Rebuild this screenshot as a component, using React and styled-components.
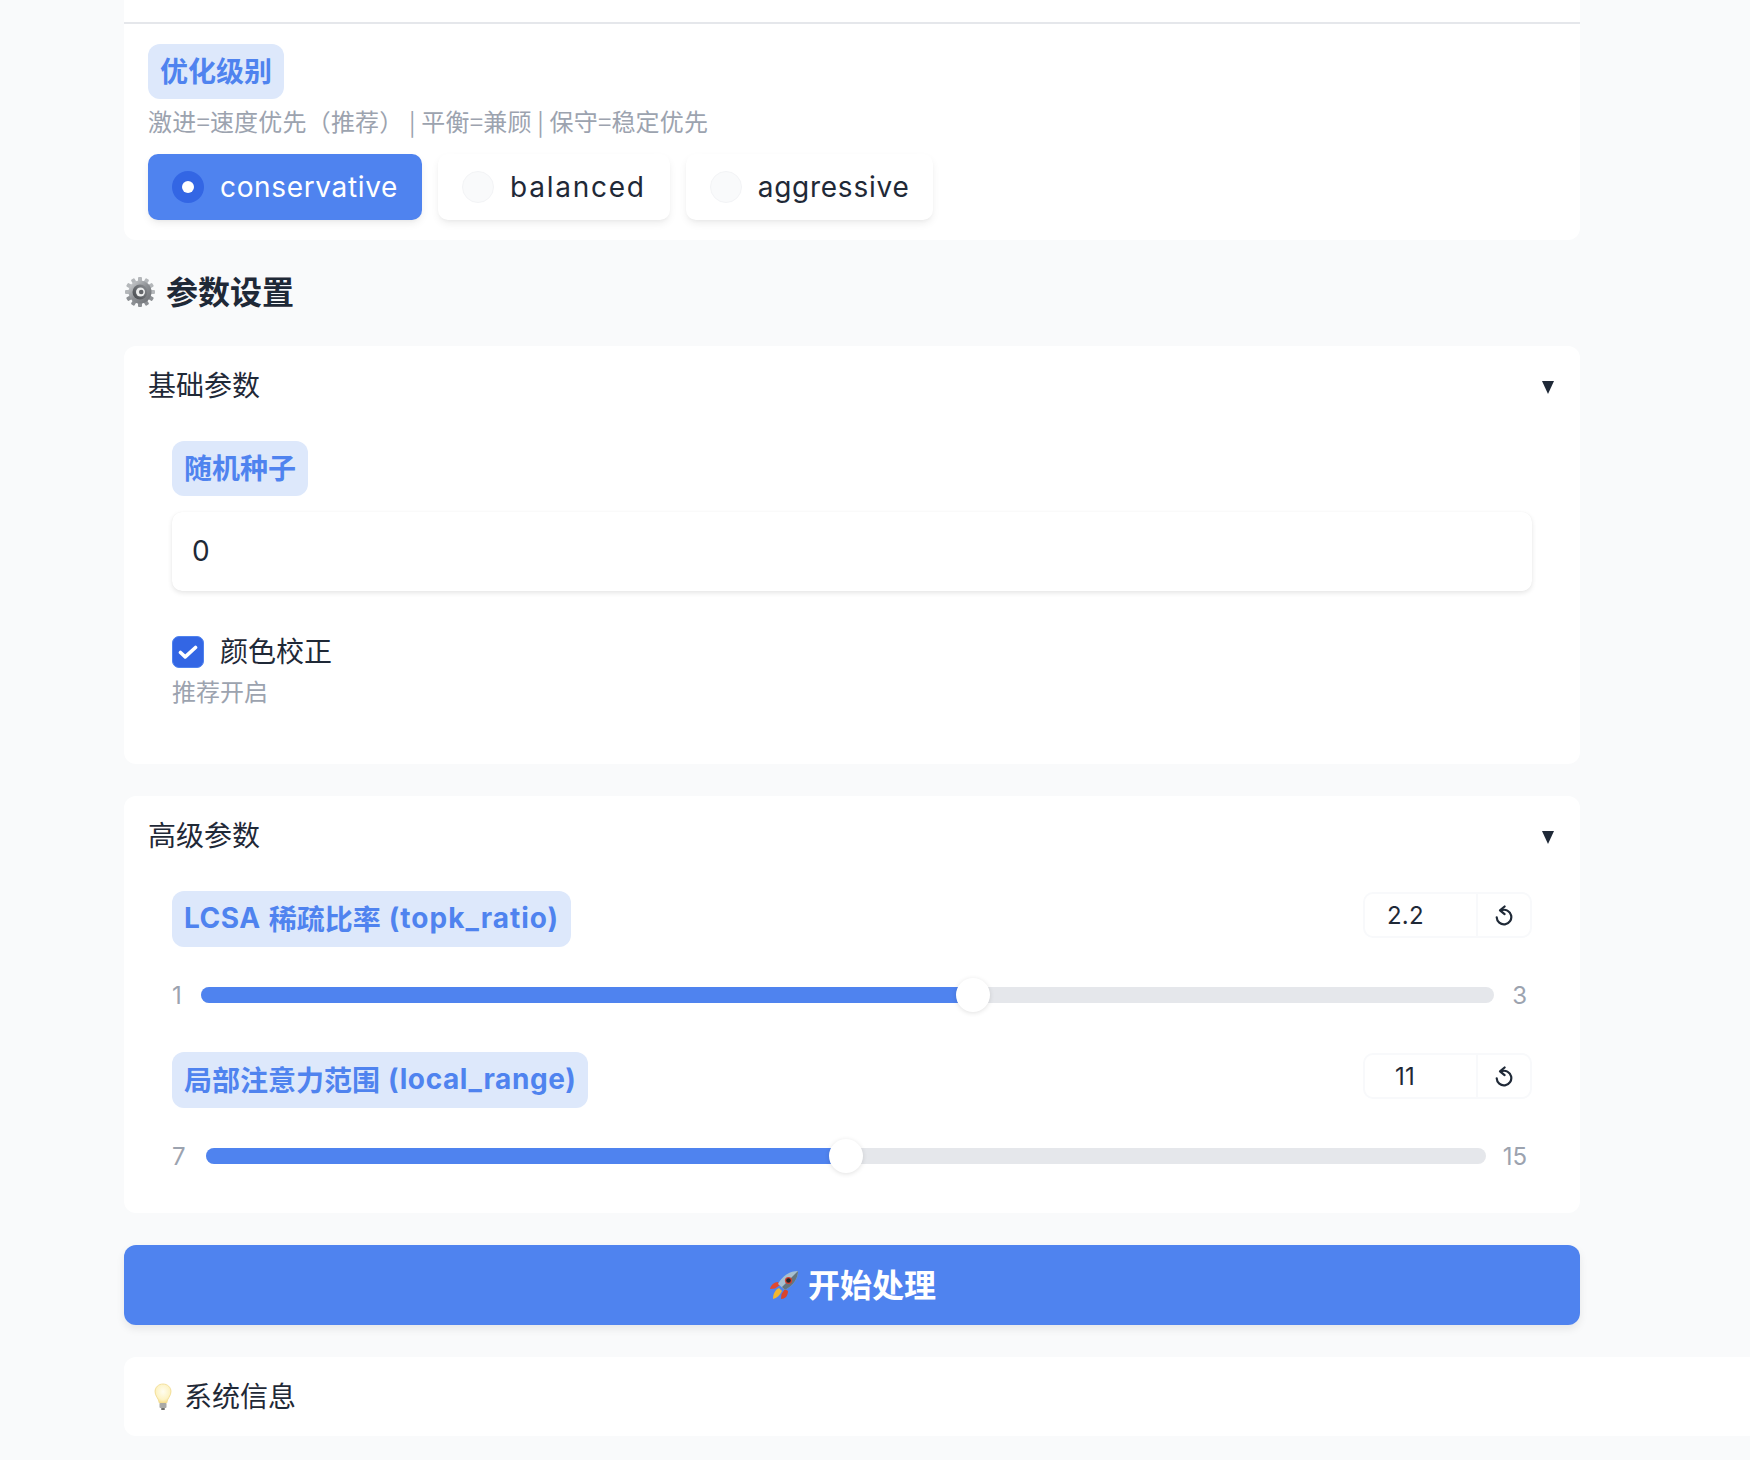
import React from "react";
import styled, { createGlobalStyle } from "styled-components";

const SANS = `"Inter", "Noto Sans CJK SC", sans-serif`;
const CJK = `"Noto Sans CJK SC", "Noto Sans", sans-serif`;

const Global = createGlobalStyle`
  html, body { margin: 0; padding: 0; background: #f9fafb; }
  body { font-family: ${SANS}; color: #1f2937; overflow: hidden; }
  * { box-sizing: border-box; }
`;

const Page = styled.div`
  width: 1750px;
  height: 1460px;
  padding-left: 124px;
  overflow: hidden;
`;
const Column = styled.main`
  width: 1456px;
`;
const Panel = styled.section`
  background: #fff;
  border-radius: 0 0 12px 12px;
`;
const PanelTop = styled.div`
  height: 24px;
  border-bottom: 2px solid #e5e7eb;
`;
const PanelBody = styled.div`
  padding: 20px 24px;
`;
const Pill = styled.div`
  display: inline-flex;
  align-items: center;
  gap: 8px;
  height: ${(p) => p.$height || "55px"};
  padding: 0 12px 3px;
  border-radius: 12px;
  background: #dde8fb;
  color: #4f83ef;
  font-family: ${SANS};
  font-size: 28px;
  font-weight: 700;
  white-space: nowrap;
`;
const PillLatin = styled.span`
  letter-spacing: ${(p) => p.$spacing};
`;
const Hint = styled.div`
  font-family: ${CJK};
  font-size: 24px;
  line-height: 32px;
  color: #9ca3af;
  margin-top: ${(p) => p.$top};
  letter-spacing: ${(p) => p.$spacing || "0"};
  white-space: nowrap;
`;
const RadioRow = styled.div`
  display: flex;
  gap: 16px;
  margin-top: 17px;
`;
const RadioCard = styled.div`
  display: flex;
  align-items: center;
  gap: 16px;
  height: 66px;
  padding: 0 24px;
  border-radius: 10px;
  font-size: 28px;
  letter-spacing: ${(p) => p.$spacing};
  background: ${(p) => (p.$on ? "#4f83ef" : "#fff")};
  color: ${(p) => (p.$on ? "#fff" : "#1f2937")};
  box-shadow: 0 4px 8px -1px rgba(0, 0, 0, 0.08), 0 2px 4px -2px rgba(0, 0, 0, 0.05);
`;
const RadioDot = styled.span`
  width: 32px;
  height: 32px;
  border-radius: 50%;
  flex: none;
  display: flex;
  align-items: center;
  justify-content: center;
  background: ${(p) => (p.$on ? "#3366e4" : "#f9fafb")};
  border: ${(p) => (p.$on ? "none" : "1px solid #f3f4f6")};
  &::after {
    content: "";
    display: ${(p) => (p.$on ? "block" : "none")};
    width: 12px;
    height: 12px;
    border-radius: 50%;
    background: #fff;
  }
`;
const LiftedText = styled.span`
  margin-bottom: 4px;
`;
const SectionTitle = styled.h2`
  display: flex;
  align-items: center;
  gap: 10px;
  height: 44px;
  margin: 30px 0 32px;
  font-family: ${CJK};
  font-size: 32px;
  font-weight: 700;
  color: #1f2937;
`;
const Card = styled.section`
  background: #fff;
  border-radius: 12px;
  height: ${(p) => p.$height};
  margin-bottom: 32px;
  padding: 0 26px 0 24px;
`;
const CardHead = styled.header`
  display: flex;
  align-items: center;
  justify-content: space-between;
  height: 75px;
  padding-top: 1px;
  font-family: ${CJK};
  font-size: 28px;
  line-height: 1;
`;
const Caret = styled.span`
  width: 0;
  height: 0;
  margin-top: 6px;
  border-left: 6px solid transparent;
  border-right: 6px solid transparent;
  border-top: 13px solid #1f2937;
`;
const BlockEdge = styled.div`
  margin-right: -2px;
  border-radius: 14px;
  background: #eceef1;
  overflow: hidden;
`;
const Block = styled.div`
  background: #fff;
  height: ${(p) => p.$height};
  padding: 20px 24px 0;
`;
const SeedBox = styled.div`
  height: 79px;
  margin-top: 16px;
  padding: 0 20px 2px;
  display: flex;
  align-items: center;
  border-radius: 10px;
  background: #fff;
  font-size: 28px;
  box-shadow: 0 2px 5px rgba(0, 0, 0, 0.1), 0 0 1px rgba(0, 0, 0, 0.06);
`;
const CheckRow = styled.label`
  display: flex;
  align-items: center;
  gap: 16px;
  height: 32px;
  margin-top: 45px;
  font-family: ${CJK};
  font-size: 28px;
  line-height: 32px;
`;
const CheckBox = styled.span`
  width: 32px;
  height: 32px;
  border-radius: 7px;
  background: #3366e4;
  border: 1px solid #4f83ef;
  display: flex;
  align-items: center;
  justify-content: center;
`;
const SliderHead = styled.div`
  display: flex;
  align-items: flex-start;
  justify-content: space-between;
  margin-top: ${(p) => p.$top};
`;
const NumberBox = styled.div`
  width: 169px;
  height: 46px;
  margin-top: 1px;
  display: flex;
  border: 2px solid #f8f9fb;
  border-radius: 10px;
`;
const NumberValue = styled.div`
  flex: 1;
  display: flex;
  align-items: center;
  padding-left: ${(p) => p.$left};
  font-size: 24px;
  letter-spacing: 0.2px;
  color: #1f2937;
`;
const ResetButton = styled.div`
  width: 54px;
  flex: none;
  border-left: 2px solid #f8f9fb;
  display: flex;
  align-items: center;
  justify-content: center;
`;
const SliderRow = styled.div`
  display: flex;
  align-items: center;
  height: 34px;
  margin-top: 31px;
  padding-right: 5px;
`;
const MinLabel = styled.span`
  width: ${(p) => p.$width};
  flex: none;
  font-size: 24px;
  color: #9ca3af;
`;
const MaxLabel = styled.span`
  width: ${(p) => p.$width};
  flex: none;
  text-align: right;
  font-size: 24px;
  color: #9ca3af;
`;
const Track = styled.div`
  position: relative;
  flex: 1;
  height: 16px;
  border-radius: 8px;
  background: #e5e7eb;
`;
const Fill = styled.div`
  height: 100%;
  border-radius: 8px 0 0 8px;
  background: #4f83ef;
`;
const Thumb = styled.span`
  position: absolute;
  top: 50%;
  width: 34px;
  height: 34px;
  border-radius: 50%;
  background: #fff;
  transform: translate(-50%, -50%);
  box-shadow: 0 1px 5px rgba(0, 0, 0, 0.12);
`;
const StartButton = styled.button`
  display: flex;
  align-items: center;
  justify-content: center;
  gap: 8px;
  width: 100%;
  height: 80px;
  padding: 0;
  border: none;
  border-radius: 12px;
  background: #4f83ef;
  color: #fff;
  font-family: ${CJK};
  font-size: 32px;
  font-weight: 700;
  box-shadow: 0 4px 8px rgba(0, 0, 0, 0.08);
`;
const InfoBar = styled.section`
  display: flex;
  align-items: center;
  gap: 12px;
  width: 1700px;
  height: 79px;
  margin-top: 32px;
  padding-left: 30px;
  background: #fff;
  border-radius: 12px 0 0 12px;
  font-family: ${CJK};
  font-size: 28px;
`;

const GearIcon = () => {
  const teeth = Array.from({ length: 12 }, (_, i) => i * 30);
  return (
    <svg width="32" height="32" viewBox="0 0 32 32" aria-hidden="true">
      <defs>
        <linearGradient id="gearBody" x1="0" y1="0" x2="1" y2="1">
          <stop offset="0" stopColor="#d4d6d8" />
          <stop offset="0.5" stopColor="#8e9195" />
          <stop offset="1" stopColor="#6a6d71" />
        </linearGradient>
        <linearGradient id="gearRing" x1="1" y1="0" x2="0" y2="1">
          <stop offset="0" stopColor="#8f9296" />
          <stop offset="1" stopColor="#44474b" />
        </linearGradient>
      </defs>
      {teeth.map((a) => (
        <rect key={a} x="14" y="1" width="4" height="6" rx="1" fill={a > 90 && a < 270 ? "#8d9094" : "#b4b7ba"} transform={`rotate(${a} 16 16)`} />
      ))}
      <circle cx="16" cy="16" r="11.500" fill="url(#gearBody)" />
      <circle cx="16" cy="16" r="7.500" fill="url(#gearRing)" />
      <circle cx="16.500" cy="16" r="4.500" fill="#eceded" />
      <circle cx="17.200" cy="16" r="2.300" fill="#63666a" />
    </svg>
  );
};

const RocketIcon = () => (
  <svg width="32" height="32" viewBox="0 0 32 32" aria-hidden="true">
    <path d="M5 30c0-5 2-9 6-11l3 3c-2 4-5 7-9 8z" fill="#f3b72e" />
    <path d="M2 20c1-4 4-7 8-7l2 3-5 3.500z" fill="#e2492f" />
    <path d="M13 30c4 0 7-3 7-8l-3-2-3.500 5z" fill="#d9442c" />
    <path d="M30 2c-8 0-15 4-20 13l7 6c9-5 13-12 13-19z" fill="#a6c0d0" />
    <path d="M30 2c0 7-4 14-13 19l-3-3z" fill="#63757f" />
    <circle cx="20.500" cy="11.500" r="3.600" fill="#d5402f" />
    <circle cx="20.500" cy="11.500" r="2.300" fill="#23262a" />
  </svg>
);

const BulbIcon = () => (
  <svg width="18" height="28" viewBox="0 0 18 28" aria-hidden="true">
    <defs>
      <radialGradient id="bulbGlass" cx="0.5" cy="0.4" r="0.6">
        <stop offset="0" stopColor="#fffdf0" />
        <stop offset="0.7" stopColor="#fdf3c4" />
        <stop offset="1" stopColor="#f6dc8a" />
      </radialGradient>
    </defs>
    <path d="M9 1c4.500 0 8 3.300 8 7.600 0 4.400-3.500 6.400-4.300 11.400H5.300C4.500 15 1 13 1 8.600 1 4.300 4.500 1 9 1z" fill="url(#bulbGlass)" stroke="#f0d98f" strokeWidth="0.8" />
    <rect x="5.500" y="20" width="7" height="5" rx="1" fill="#a9a9a6" />
    <rect x="7" y="25" width="4" height="2" rx="1" fill="#6e6e6b" />
  </svg>
);

const CheckIcon = () => (
  <svg width="20" height="20" viewBox="0 0 20 20" aria-hidden="true">
    <path d="M2.500 10.500l4.700 4.300L17.500 5.500" fill="none" stroke="#fff" strokeWidth="3.600" strokeLinecap="round" strokeLinejoin="round" />
  </svg>
);

const ResetIcon = () => (
  <svg width="18" height="21" viewBox="0 0 18 21" aria-hidden="true">
    <path d="M6.500 5.200A7.300 7.300 0 1 1 1.700 12.300" fill="none" stroke="#1f2937" strokeWidth="2.200" strokeLinecap="round" />
    <path d="M9.600 1.500L5 5.300l4.600 3.800" fill="none" stroke="#1f2937" strokeWidth="2.200" strokeLinecap="round" strokeLinejoin="round" />
  </svg>
);

const options = [
  { name: "conservative", spacing: "0.65px" },
  { name: "balanced", spacing: "1.75px" },
  { name: "aggressive", spacing: "0.75px" },
];

const sliders = [
  {
    latin: "LCSA",
    latinSpacing: "0.55px",
    cjk: "稀疏比率",
    code: "(topk_ratio)",
    codeSpacing: "1px",
    value: 2.2,
    min: 1,
    max: 3,
    left: "22px",
    minW: "29px",
    maxW: "33px",
    top: "0",
  },
  {
    cjk: "局部注意力范围",
    code: "(local_range)",
    codeSpacing: "0.6px",
    value: 11,
    min: 7,
    max: 15,
    left: "30px",
    minW: "34px",
    maxW: "41px",
    top: "40px",
  },
];

const Slider = ({ s }) => {
  const ratio = (s.value - s.min) / (s.max - s.min);
  const pos = `calc(17px + (100% - 34px) * ${ratio})`;
  return (
    <>
      <SliderHead $top={s.top}>
        <Pill $height="56px">
          {s.latin && <PillLatin $spacing={s.latinSpacing}>{s.latin}</PillLatin>}
          {s.cjk}
          <PillLatin $spacing={s.codeSpacing}>{s.code}</PillLatin>
        </Pill>
        <NumberBox>
          <NumberValue $left={s.left}>{s.value}</NumberValue>
          <ResetButton>
            <ResetIcon />
          </ResetButton>
        </NumberBox>
      </SliderHead>
      <SliderRow>
        <MinLabel $width={s.minW}>{s.min}</MinLabel>
        <Track>
          <Fill style={{ width: pos }} />
          <Thumb style={{ left: pos }} />
        </Track>
        <MaxLabel $width={s.maxW}>{s.max}</MaxLabel>
      </SliderRow>
    </>
  );
};

export default function App() {
  return (
    <Page>
      <Global />
      <Column>
        <Panel>
          <PanelTop />
          <PanelBody>
            <Pill>优化级别</Pill>
            <Hint $top="6px" $spacing="0.2px">激进=速度优先（推荐） | 平衡=兼顾 | 保守=稳定优先</Hint>
            <RadioRow>
              {options.map((o, i) => (
                <RadioCard key={o.name} $on={i === 0} $spacing={o.spacing}>
                  <RadioDot $on={i === 0} />
                  {o.name}
                </RadioCard>
              ))}
            </RadioRow>
          </PanelBody>
        </Panel>

        <SectionTitle>
          <GearIcon />
          <LiftedText>参数设置</LiftedText>
        </SectionTitle>

        <Card $height="418px">
          <CardHead>
            基础参数
            <Caret />
          </CardHead>
          <BlockEdge>
            <Block $height="323px">
              <Pill>随机种子</Pill>
              <SeedBox>0</SeedBox>
              <CheckRow>
                <CheckBox>
                  <CheckIcon />
                </CheckBox>
                <LiftedText>颜色校正</LiftedText>
              </CheckRow>
              <Hint $top="7px">推荐开启</Hint>
            </Block>
          </BlockEdge>
        </Card>

        <Card $height="417px">
          <CardHead>
            高级参数
            <Caret />
          </CardHead>
          <BlockEdge>
            <Block $height="317px">
              {sliders.map((s) => (
                <Slider key={s.code} s={s} />
              ))}
            </Block>
          </BlockEdge>
        </Card>

        <StartButton>
          <RocketIcon />
          <LiftedText>开始处理</LiftedText>
        </StartButton>

        <InfoBar>
          <BulbIcon />
          <LiftedText>系统信息</LiftedText>
        </InfoBar>
      </Column>
    </Page>
  );
}
